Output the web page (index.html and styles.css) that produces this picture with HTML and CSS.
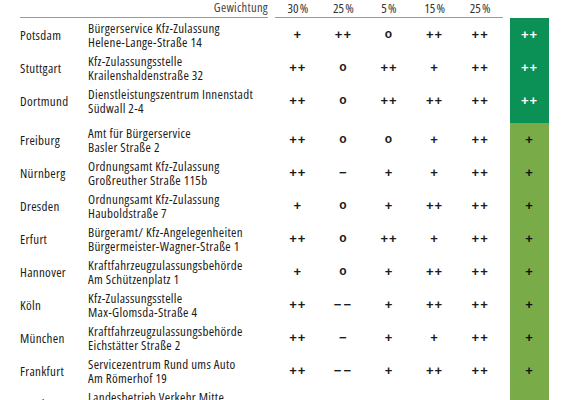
FILE: index.html
```html
<!DOCTYPE html>
<html lang="de">
<head>
  <meta charset="UTF-8" />
  <meta name="viewport" content="width=device-width, initial-scale=1.0" />
  <title>Kfz-Zulassungsstellen im Vergleich</title>
  <link rel="stylesheet" href="styles.css">
</head>
<body>
  <div class="table">
    <div class="head">
      <div class="weight">Gewichtung</div>
      <div class="pcts">
        <span>30&#8239;%</span><span>25&#8239;%</span><span>5&#8239;%</span><span>15&#8239;%</span><span>25&#8239;%</span>
      </div>
      <div class="score"></div>
    </div>

    <div class="row best">
      <div class="city">Potsdam</div>
      <div class="addr">Bürgerservice Kfz-Zulassung<br>Helene-Lange-Straße 14</div>
      <div class="marks"><span>+</span><span>++</span><span class="zero">o</span><span>++</span><span>++</span></div>
      <div class="score">++</div>
    </div>
    <div class="row best">
      <div class="city">Stuttgart</div>
      <div class="addr">Kfz-Zulassungsstelle<br>Krailenshaldenstraße 32</div>
      <div class="marks"><span>++</span><span class="zero">o</span><span>++</span><span>+</span><span>++</span></div>
      <div class="score">++</div>
    </div>
    <div class="row best group-end">
      <div class="city">Dortmund</div>
      <div class="addr">Dienstleistungszentrum Innenstadt<br>Südwall 2-4</div>
      <div class="marks"><span>++</span><span class="zero">o</span><span>++</span><span>++</span><span>++</span></div>
      <div class="score">++</div>
    </div>

    <div class="row good">
      <div class="city">Freiburg</div>
      <div class="addr">Amt für Bürgerservice<br>Basler Straße 2</div>
      <div class="marks"><span>++</span><span class="zero">o</span><span class="zero">o</span><span>+</span><span>++</span></div>
      <div class="score">+</div>
    </div>
    <div class="row good">
      <div class="city">Nürnberg</div>
      <div class="addr">Ordnungsamt Kfz-Zulassung<br>Großreuther Straße 115b</div>
      <div class="marks"><span>++</span><span>&minus;</span><span>+</span><span>+</span><span>++</span></div>
      <div class="score">+</div>
    </div>
    <div class="row good">
      <div class="city">Dresden</div>
      <div class="addr">Ordnungsamt Kfz-Zulassung<br>Hauboldstraße 7</div>
      <div class="marks"><span>+</span><span class="zero">o</span><span>+</span><span>++</span><span>++</span></div>
      <div class="score">+</div>
    </div>
    <div class="row good">
      <div class="city">Erfurt</div>
      <div class="addr">Bürgeramt/ Kfz-Angelegenheiten<br>Bürgermeister-Wagner-Straße 1</div>
      <div class="marks"><span>++</span><span class="zero">o</span><span>++</span><span>+</span><span>++</span></div>
      <div class="score">+</div>
    </div>
    <div class="row good">
      <div class="city">Hannover</div>
      <div class="addr">Kraftfahrzeugzulassungsbehörde<br>Am Schützenplatz 1</div>
      <div class="marks"><span>+</span><span class="zero">o</span><span>+</span><span>++</span><span>++</span></div>
      <div class="score">+</div>
    </div>
    <div class="row good">
      <div class="city">Köln</div>
      <div class="addr">Kfz-Zulassungsstelle<br>Max-Glomsda-Straße 4</div>
      <div class="marks"><span>++</span><span class="neg">&minus;&minus;</span><span>+</span><span>++</span><span>++</span></div>
      <div class="score">+</div>
    </div>
    <div class="row good">
      <div class="city">München</div>
      <div class="addr">Kraftfahrzeugzulassungsbehörde<br>Eichstätter Straße 2</div>
      <div class="marks"><span>++</span><span>&minus;</span><span>+</span><span>+</span><span>++</span></div>
      <div class="score">+</div>
    </div>
    <div class="row good">
      <div class="city">Frankfurt</div>
      <div class="addr">Servicezentrum Rund ums Auto<br>Am Römerhof 19</div>
      <div class="marks"><span>++</span><span class="neg">&minus;&minus;</span><span>+</span><span>++</span><span>++</span></div>
      <div class="score">+</div>
    </div>
    <div class="row good">
      <div class="city">Hamburg</div>
      <div class="addr">Landesbetrieb Verkehr Mitte<br>Ausschläger Weg 100</div>
      <div class="marks"><span></span><span></span><span></span><span></span><span></span></div>
      <div class="score"></div>
    </div>
  </div>
</body>
</html>
```

FILE: styles.css
```css
body {
  margin: 0;
  background: #fff;
  color: #1b1b1b;
  font-family: "Open Sans", sans-serif;
  font-stretch: 87.5%;
  font-size: 13px;
  letter-spacing: 0.3px;
}
.table {
  padding-left: 20px;
  width: 529px;
}
.head {
  display: flex;
  height: 18px;
}
.head .weight {
  width: 248px;
  text-align: right;
  border-bottom: 1px solid #9a9a9a;
  color: #444;
  font-size: 12.5px;
  line-height: 16px;
}
.pcts {
  display: flex;
  margin-left: 7px;
  width: 228px;
  border-bottom: 1px solid #9a9a9a;
  color: #333;
  font-size: 13px;
  line-height: 16px;
}
.pcts span {
  flex: 1;
  text-align: center;
}
.head .score {
  margin-left: 7px;
  width: 39px;
}
.row {
  display: flex;
  align-items: center;
  height: 33px;
}
.row.group-end {
  height: 39px;
  padding-bottom: 6px;
  box-sizing: border-box;
}
.city {
  width: 68px;
}
.addr {
  width: 180px;
  line-height: 14px;
  white-space: nowrap;
}
.marks {
  display: flex;
  margin-left: 7px;
  width: 228px;
  font-family: "Liberation Sans", Arial, sans-serif;
  font-weight: bold;
  font-size: 13px;
  letter-spacing: 1px;
}
.marks span {
  flex: 1;
  text-align: center;
}
.marks .zero {
  font-size: 12px;
}
.marks .neg {
  letter-spacing: 2px;
}
.row .score {
  margin-left: 7px;
  width: 39px;
  align-self: stretch;
  display: flex;
  align-items: center;
  justify-content: center;
  font-family: "Liberation Sans", Arial, sans-serif;
  font-weight: bold;
  font-size: 13px;
  letter-spacing: 1px;
}
.row.group-end .score {
  margin-bottom: -6px;
  padding-bottom: 6px;
}
.best .score {
  background: #0b9155;
  color: #fff;
}
.good .score {
  background: #79ab48;
  color: #111;
}
```
